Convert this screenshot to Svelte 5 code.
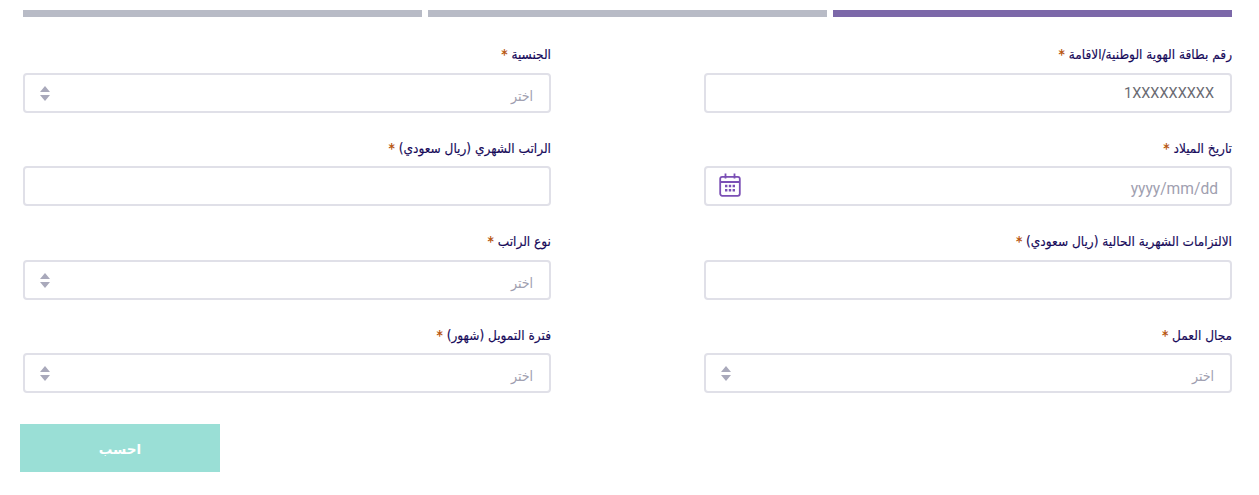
<script>
  const fields = [
    { label: 'رقم بطاقة الهوية الوطنية/الاقامة', kind: 'input', value: '1XXXXXXXXX' },
    { label: 'الجنسية', kind: 'select' },
    { label: 'تاريخ الميلاد', kind: 'date' },
    { label: 'الراتب الشهري (ريال سعودي)', kind: 'input', value: '' },
    { label: 'الالتزامات الشهرية الحالية (ريال سعودي)', kind: 'input', value: '' },
    { label: 'نوع الراتب', kind: 'select' },
    { label: 'مجال العمل', kind: 'select' },
    { label: 'فترة التمويل (شهور)', kind: 'select' }
  ];
</script>

<main class="page" dir="rtl">
  <div class="steps">
    <span class="step active"></span>
    <span class="step"></span>
    <span class="step"></span>
  </div>

  <form class="grid" onsubmit={(e) => e.preventDefault()}>
    {#each fields as f}
      <div class="field">
        <div class="label">{f.label} <span class="req">*</span></div>
        <div class="control">
          {#if f.kind === 'input'}
            <span class="value">{f.value}</span>
          {:else if f.kind === 'date'}
            <span class="ph latin">yyyy/mm/dd</span>
            <svg class="cal" viewBox="0 0 22 24" width="22" height="24" fill="none" stroke="#7b4fb5" stroke-width="1.8">
              <rect x="1.2" y="3.8" width="19.6" height="19" rx="2" />
              <path d="M1.2 9h19.6M6.5 0.5v5M15.5 0.5v5" />
              <path d="M6 13h2.4M9.8 13h2.4M13.6 13h2.4M6 17.3h2.4M9.8 17.3h2.4M13.6 17.3h2.4" stroke-width="2.6" />
            </svg>
          {:else}
            <span class="ph">اختر</span>
            <svg class="updown" viewBox="0 0 10 15" width="10" height="15" fill="#a9a9bb">
              <path d="M5 0 10 6H0zM5 15 0 9h10z" />
            </svg>
          {/if}
        </div>
      </div>
    {/each}
  </form>

  <div class="actions">
    <button class="submit" type="button">احسب</button>
  </div>
</main>

<style>
  :global(body) {
    margin: 0;
    background: #fff;
  }
  .page {
    width: 1259px;
    height: 495px;
    box-sizing: border-box;
    padding: 10px 27px 0 23px;
    font-family: "DejaVu Sans", sans-serif;
    font-stretch: condensed;
  }
  .steps {
    display: flex;
    gap: 6px;
  }
  .step {
    flex: 1;
    height: 7px;
    background: #b8bbc6;
  }
  .step.active {
    background: #7c68a9;
  }
  .grid {
    display: grid;
    grid-template-columns: 528px 528px;
    justify-content: space-between;
    row-gap: 25px;
    margin-top: 27.4px;
  }
  .field {
    display: flex;
    flex-direction: column;
    gap: 7.5px;
  }
  .label {
    height: 21px;
    line-height: 20px;
    font-size: 13.5px;
    color: #170a5a;
    -webkit-text-stroke: 0.15px #170a5a;
  }
  .req {
    color: #b8570f;
    -webkit-text-stroke: 0;
    font-weight: 700;
  }
  .control {
    height: 40px;
    box-sizing: border-box;
    border: 2px solid #e0e0e8;
    border-radius: 4px;
    padding: 0 16px;
    display: flex;
    align-items: center;
    justify-content: space-between;
    background: #fff;
  }
  .value {
    font-family: "Roboto", sans-serif;
    font-stretch: normal;
    font-size: 14.5px;
    color: #6a6a72;
    padding-top: 2px;
  }
  .ph {
    font-size: 14px;
    color: #a0a0b0;
    padding-top: 6px;
  }
  .latin {
    font-family: "Roboto", sans-serif;
    font-stretch: normal;
    font-size: 15.6px;
    margin-right: -4px;
    padding-top: 5px;
  }
  .cal {
    margin-left: -3px;
    margin-top: -2px;
  }
  .updown {
    margin-left: -1px;
    margin-top: 1px;
  }
  .actions {
    margin-top: 31px;
    margin-left: -3px;
    display: flex;
    justify-content: flex-end;
  }
  .submit {
    width: 200px;
    height: 48px;
    border: 0;
    padding: 2px 0 0;
    background: #9adfd6;
    color: #fff;
    font-family: inherit;
    font-size: 13.5px;
    font-weight: 700;
  }
</style>
